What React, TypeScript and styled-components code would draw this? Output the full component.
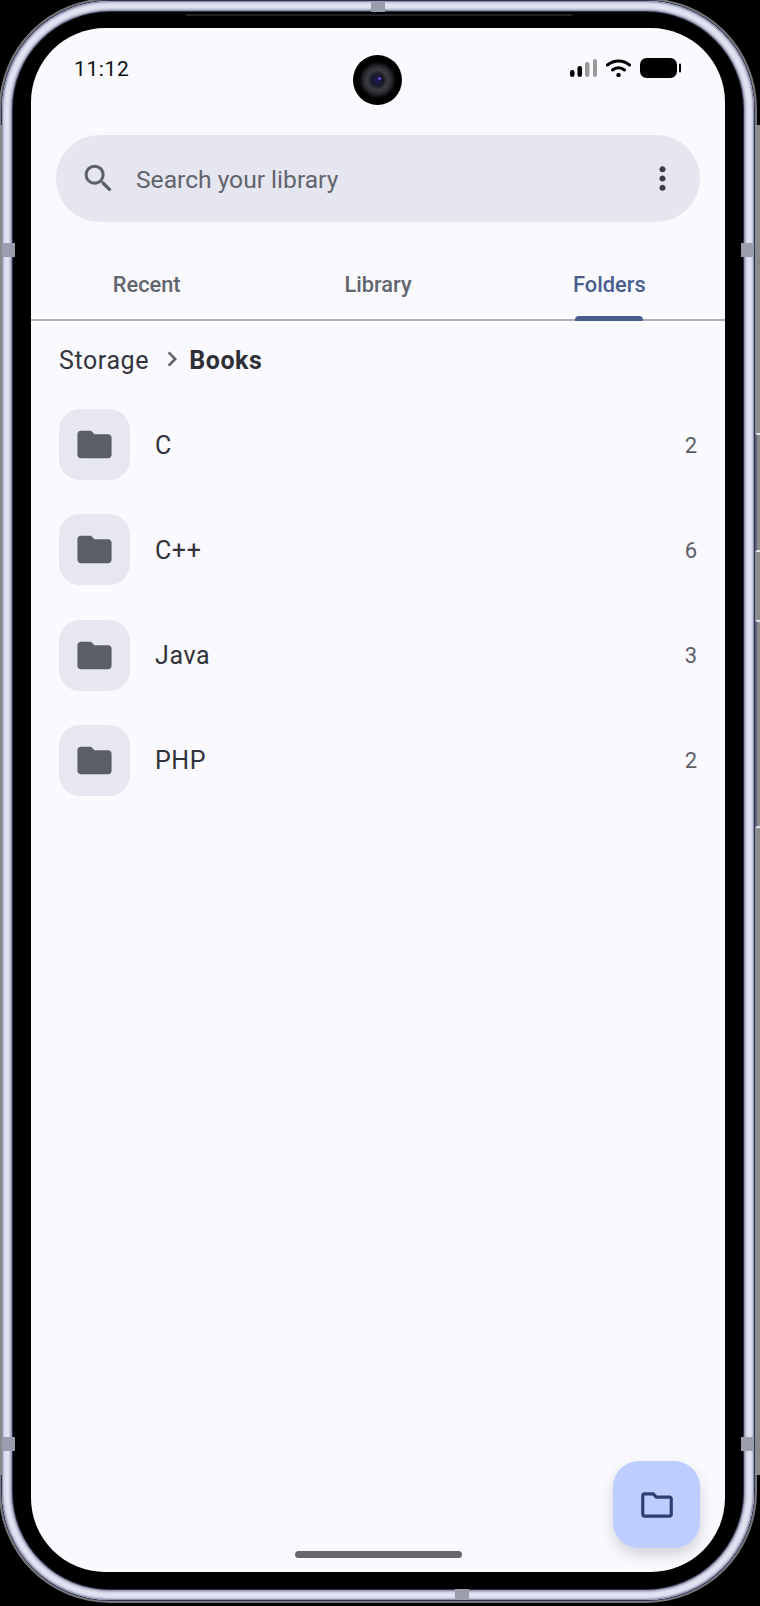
import React from "react";
import styled, { createGlobalStyle } from "styled-components";
import {
  MdChevronRight,
  MdFolder,
  MdMoreVert,
  MdOutlineFolder,
  MdSearch,
} from "react-icons/md";

const GlobalStyle = createGlobalStyle`
  html, body {
    margin: 0;
    padding: 0;
    background: #000;
  }
  * {
    box-sizing: border-box;
  }
  #root {
    width: 760px;
    height: 1606px;
    overflow: hidden;
  }
`;

const folders = [
  { name: "C", count: 2 },
  { name: "C++", count: 6 },
  { name: "Java", count: 3 },
  { name: "PHP", count: 2 },
];

const tabs = ["Recent", "Library", "Folders"];

const Phone = styled.div`
  position: relative;
  width: 760px;
  height: 1606px;
  padding: 1px 6px 6px 2px;
  background: #000;
  font-family: Roboto, "Liberation Sans", sans-serif;
`;

const Metal = styled.div`
  width: 100%;
  height: 100%;
  padding: 11px;
  border-radius: 108px;
  background: #e0e3f1;
  box-shadow:
    0 0 0 1px #2f3150,
    0 0 0 3px #77777c,
    inset 0 0 0 1px #8f92aa,
    inset 0 0 2px 2px #b9bcd0;
`;

const Bezel = styled.div`
  width: 100%;
  height: 100%;
  padding: 16px 18px 17px 18px;
  border-radius: 97px;
  background: #000;
  box-shadow:
    0 0 0 1px #2f3047,
    0 0 3px 2px #6a6c88;
`;

const Screen = styled.div`
  position: relative;
  display: flex;
  flex-direction: column;
  height: 100%;
  border-radius: 74px;
  background: #f9f9fe;
  overflow: hidden;
`;

const EdgeBand = styled.div`
  position: absolute;
  width: 14px;
  height: 11px;
  background: #9a9dac;
`;

const TopBand = styled(EdgeBand)`
  left: 371px;
  top: 1px;
`;

const BottomBand = styled(EdgeBand)`
  left: 455px;
  bottom: 6px;
`;

const SideBand = styled(EdgeBand)<{ $right?: boolean; $y: number }>`
  width: 13px;
  height: 14px;
  top: ${(p) => p.$y}px;
  ${(p) => (p.$right ? "right: 6px;" : "left: 2px;")}
`;

const EdgeStrip = styled.div<{ $right?: boolean }>`
  position: absolute;
  top: 125px;
  height: 1350px;
  width: ${(p) => (p.$right ? "5px" : "2px")};
  background: #8b8b8e;
  ${(p) => (p.$right ? "right: 0;" : "left: 0;")}
`;

const SideKey = styled.div<{ $y: number; $h: number }>`
  position: absolute;
  right: 0;
  top: ${(p) => p.$y}px;
  width: 5px;
  height: ${(p) => p.$h}px;
  border-left: 2px solid #5c5e78;
  border-top: 2px solid #e3e5f0;
  border-bottom: 2px solid #e3e5f0;
  border-radius: 2px 0 0 2px;
`;

const Earpiece = styled.div`
  position: absolute;
  left: 185px;
  top: 14px;
  width: 388px;
  height: 2px;
  border-radius: 0 0 4px 4px;
  background: #232327;
`;

const StatusBar = styled.div`
  display: flex;
  align-items: center;
  justify-content: space-between;
  height: 80px;
  margin-bottom: -2px;
  padding: 0 44px;
  flex-shrink: 0;
`;

const Clock = styled.span`
  margin-top: 2px;
  margin-left: -1px;
  font-size: 21px;
  letter-spacing: 0.6px;
  color: #111;
`;

const StatusIcons = styled.div`
  display: flex;
  align-items: center;
  gap: 9px;
`;

const CameraHole = styled.div`
  position: absolute;
  left: 322px;
  top: 27px;
  width: 49px;
  height: 50px;
  border-radius: 50%;
  background: radial-gradient(
    circle at 50% 50%,
    #1d1648 0 3px,
    #191b24 6px,
    #3b3d42 10px,
    #2a2b2f 14px,
    #0d0d10 17px,
    #000 19px
  );

  &::after {
    content: "";
    position: absolute;
    left: 25px;
    top: 22px;
    width: 3px;
    height: 3px;
    border-radius: 50%;
    background: #6a45c8;
  }
`;

const SearchBar = styled.div`
  display: flex;
  align-items: center;
  height: 87px;
  margin: 29px 25px 0;
  padding: 0 19px 0 24px;
  border-radius: 44px;
  background: #e5e6ef;
  color: #5e6068;
  flex-shrink: 0;
`;

const SearchText = styled.span`
  flex: 1;
  margin-top: 2px;
  margin-left: 19px;
  font-size: 24.6px;
  color: #62646d;
`;

const TabRow = styled.div`
  display: flex;
  height: 99px;
  border-bottom: 2px solid #aeafbc;
  flex-shrink: 0;
`;

const Tab = styled.div<{ $active?: boolean }>`
  position: relative;
  flex: 1;
  display: flex;
  align-items: center;
  justify-content: center;
  padding-top: 28px;
  font-size: 21.8px;
  font-weight: 500;
  color: ${(p) => (p.$active ? "#4a5d8f" : "#63656d")};
`;

const TabMarker = styled.span`
  position: absolute;
  bottom: -2px;
  left: 50%;
  width: 68px;
  height: 5px;
  margin-left: -34px;
  border-radius: 4px 4px 0 0;
  background: #4a5d8f;
`;

const Crumbs = styled.div`
  display: flex;
  align-items: center;
  height: 39px;
  margin-top: 20px;
  padding-left: 28px;
  font-size: 25px;
  letter-spacing: 0.6px;
  color: #34353c;
  flex-shrink: 0;
`;

const CrumbArrow = styled(MdChevronRight)`
  width: 30px;
  height: 30px;
  margin: -3px 2px 0 8px;
  color: #5e6068;
`;

const CrumbCurrent = styled.strong`
  font-weight: 700;
  color: #2e2f36;
`;

const List = styled.div`
  display: flex;
  flex-direction: column;
  gap: 34.25px;
  margin-top: 29px;
  padding: 0 28px;
`;

const Row = styled.div`
  display: flex;
  align-items: center;
  height: 71px;
`;

const FolderTile = styled.div`
  display: flex;
  align-items: center;
  justify-content: center;
  width: 71px;
  height: 71px;
  border-radius: 21px;
  background: #e6e7f0;
  color: #5c5e67;
`;

const FolderName = styled.span`
  flex: 1;
  margin-top: 1px;
  margin-left: 25px;
  font-size: 25px;
  letter-spacing: 0.6px;
  color: #32333a;
`;

const FolderCount = styled.span`
  margin-top: 1px;
  font-size: 22px;
  color: #5e6068;
`;

const Fab = styled.div`
  position: absolute;
  right: 25px;
  bottom: 24px;
  display: flex;
  align-items: center;
  justify-content: center;
  width: 87px;
  height: 87px;
  border-radius: 26px;
  background: #bdcdff;
  color: #2b3f6d;
  box-shadow: 0 7px 14px rgba(60, 60, 70, 0.2);
`;

const HomeBar = styled.div`
  position: absolute;
  left: 264px;
  bottom: 14px;
  width: 167px;
  height: 7px;
  border-radius: 4px;
  background: #66676b;
`;

const SignalIcon = () => (
  <svg width="27" height="18" viewBox="0 0 27 18">
    <rect x="0" y="11" width="4.500" height="7" rx="2.200" fill="#000" />
    <rect x="7.500" y="7" width="4.500" height="11" rx="2.200" fill="#000" />
    <rect x="15" y="3" width="4.500" height="15" rx="2.200" fill="#999" />
    <rect x="23" y="0" width="4" height="18" rx="2" fill="#999" />
  </svg>
);

const WifiIcon = () => (
  <svg width="25" height="18" viewBox="0 0 25 18" fill="none" stroke="#000" strokeWidth="3" strokeLinecap="round">
    <path d="M1.500 6C8 0.500 17 0.500 23.500 6" />
    <path d="M6.500 11C10 8 15 8 18.500 11" />
    <circle cx="12.500" cy="16" r="2.200" fill="#000" stroke="none" />
  </svg>
);

const BatteryIcon = () => (
  <svg width="41" height="20" viewBox="0 0 41 20">
    <rect x="0" y="0" width="37" height="20" rx="6.500" fill="#000" />
    <rect x="39" y="5.500" width="2" height="9" rx="1" fill="#000" />
  </svg>
);

export default function App() {
  return (
    <>
      <GlobalStyle />
      <Phone>
        <EdgeStrip />
        <EdgeStrip $right />
        <Metal>
          <Bezel>
            <Screen>
              <StatusBar>
                <Clock>11:12</Clock>
                <StatusIcons>
                  <SignalIcon />
                  <WifiIcon />
                  <BatteryIcon />
                </StatusIcons>
              </StatusBar>
              <CameraHole />
              <SearchBar>
                <MdSearch size={37} />
                <SearchText>Search your library</SearchText>
                <MdMoreVert size={37} color="#3c3d46" />
              </SearchBar>
              <TabRow>
                {tabs.map((t) => (
                  <Tab key={t} $active={t === "Folders"}>
                    {t}
                    {t === "Folders" && <TabMarker />}
                  </Tab>
                ))}
              </TabRow>
              <Crumbs>
                Storage
                <CrumbArrow />
                <CrumbCurrent>Books</CrumbCurrent>
              </Crumbs>
              <List>
                {folders.map((f) => (
                  <Row key={f.name}>
                    <FolderTile>
                      <MdFolder size={41} />
                    </FolderTile>
                    <FolderName>{f.name}</FolderName>
                    <FolderCount>{f.count}</FolderCount>
                  </Row>
                ))}
              </List>
              <HomeBar />
              <Fab>
                <MdOutlineFolder size={38} />
              </Fab>
            </Screen>
          </Bezel>
        </Metal>
        <Earpiece />
        <TopBand />
        <BottomBand />
        <SideBand $y={243} />
        <SideBand $y={1437} />
        <SideBand $right $y={243} />
        <SideBand $right $y={1437} />
        <SideKey $y={433} $h={119} />
        <SideKey $y={620} $h={208} />
      </Phone>
    </>
  );
}
